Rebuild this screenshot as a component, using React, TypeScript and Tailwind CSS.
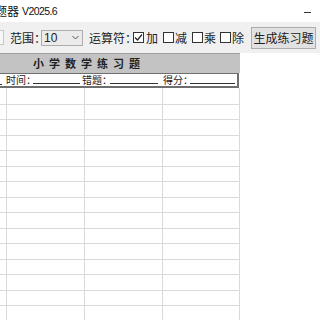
import React from "react";

const cjk = { fontFamily: '"Noto Sans CJK SC", "Microsoft YaHei", sans-serif' };

function Check({ checked }: { checked?: boolean }) {
  return (
    <div className="w-[11px] h-[11px] border border-[#333333] bg-white flex items-center justify-center shrink-0">
      {checked && (
        <svg width="9" height="9" viewBox="0 0 9 9">
          <path d="M1 4.5 L3.5 7 L8 1.5" fill="none" stroke="#222" strokeWidth="1.2" />
        </svg>
      )}
    </div>
  );
}

const rowHeights = [17, 15, 16, 15, 16, 15, 16, 15, 16, 15, 16, 15, 16, 15, 16];

export default function App() {
  return (
    <div className="w-[320px] h-[320px] overflow-hidden bg-white text-black" style={cjk}>
      {/* title bar */}
      <div className="h-[22px] bg-white flex items-center justify-between">
        <div className="flex items-center ml-[-5px] text-[12px] leading-none text-[#111] whitespace-nowrap">
          <span>题器</span>
          <span className="ml-[3px] text-[10.5px] tracking-[-0.6px]" style={{ fontFamily: '"Liberation Sans", Arial, sans-serif' }}>V2025.6</span>
        </div>
        <div className="w-[7px] h-[1px] bg-[#333] mr-[9px] mt-[2px]" />
      </div>

      {/* toolbar */}
      <div className="h-[31px] bg-[#f0f0f0] flex items-center text-[12px] leading-none text-[#222] whitespace-nowrap">
        <div className="w-[14px] h-[15px] ml-[-10px] bg-[#f7f7f7] border border-[#c8c8c8] shrink-0" />
        <span className="ml-[6px] w-[31px] shrink-0">范围：</span>
        <div className="w-[42px] h-[16px] border border-[#adadad] bg-[#ebebeb] flex items-center justify-between px-[2px] shrink-0">
          <span style={{ fontFamily: '"Liberation Sans", Arial, sans-serif' }} className="text-[12px]">10</span>
          <svg width="7" height="5" viewBox="0 0 7 5" className="mr-[1px]">
            <path d="M0.5 1 L3.5 4 L6.5 1" fill="none" stroke="#555" strokeWidth="1" />
          </svg>
        </div>
        <span className="ml-[6px] w-[44px] shrink-0">运算符：</span>
        <Check checked />
        <span className="ml-[2px] w-[17px] shrink-0">加</span>
        <Check />
        <span className="ml-[1px] w-[17px] shrink-0">减</span>
        <Check />
        <span className="ml-[1px] w-[16px] shrink-0">乘</span>
        <Check />
        <span className="ml-[1px] w-[19px] shrink-0">除</span>
        <div className="w-[65px] h-[22px] border border-[#adadad] bg-[#e1e1e1] flex items-center justify-center shrink-0 mt-[1px]">
          生成练习题
        </div>
      </div>

      {/* sheet */}
      <div className="flex">
        <div className="w-[240px] shrink-0">
          <div className="h-[20px] border-t border-[#a0a0a0] bg-[#c3c3c3] flex items-center pl-[33px] text-[11px] font-bold text-[#222] leading-none">
            {"小学数学练习题".split("").map((c, i) => (
              <span key={i} className="w-[16px] shrink-0">{c}</span>
            ))}
          </div>
          <div className="w-[239px] h-[15px] border-t border-b-2 border-r-2 border-[#6e6e6e] flex items-center text-[10px] leading-none text-[#2a1515] relative whitespace-nowrap">
            <div className="absolute left-0 top-[10px] w-[2px] h-[1px] bg-[#333]" />
            <span className="ml-[6px] w-[27px] shrink-0">时间：</span>
            <div className="w-[47px] h-[1px] bg-[#333] mt-[6px] shrink-0" />
            <span className="ml-[2px] w-[28px] shrink-0">错题：</span>
            <div className="w-[48px] h-[1px] bg-[#333] mt-[6px] shrink-0" />
            <span className="ml-[5px] w-[27px] shrink-0">得分：</span>
            <div className="w-[45px] h-[1px] bg-[#333] mt-[6px] shrink-0" />
          </div>
          {rowHeights.map((h, i) => (
            <div key={i} className="flex border-b border-[#dadada]" style={{ height: h }}>
              <div className="w-[7px] border-r border-[#dadada]" />
              <div className="w-[78px] border-r border-[#dadada]" />
              <div className="w-[78px] border-r border-[#dadada]" />
              <div className="w-[77px] border-r border-[#dadada]" />
            </div>
          ))}
        </div>
        <div className="flex-1 bg-white" />
      </div>
    </div>
  );
}
